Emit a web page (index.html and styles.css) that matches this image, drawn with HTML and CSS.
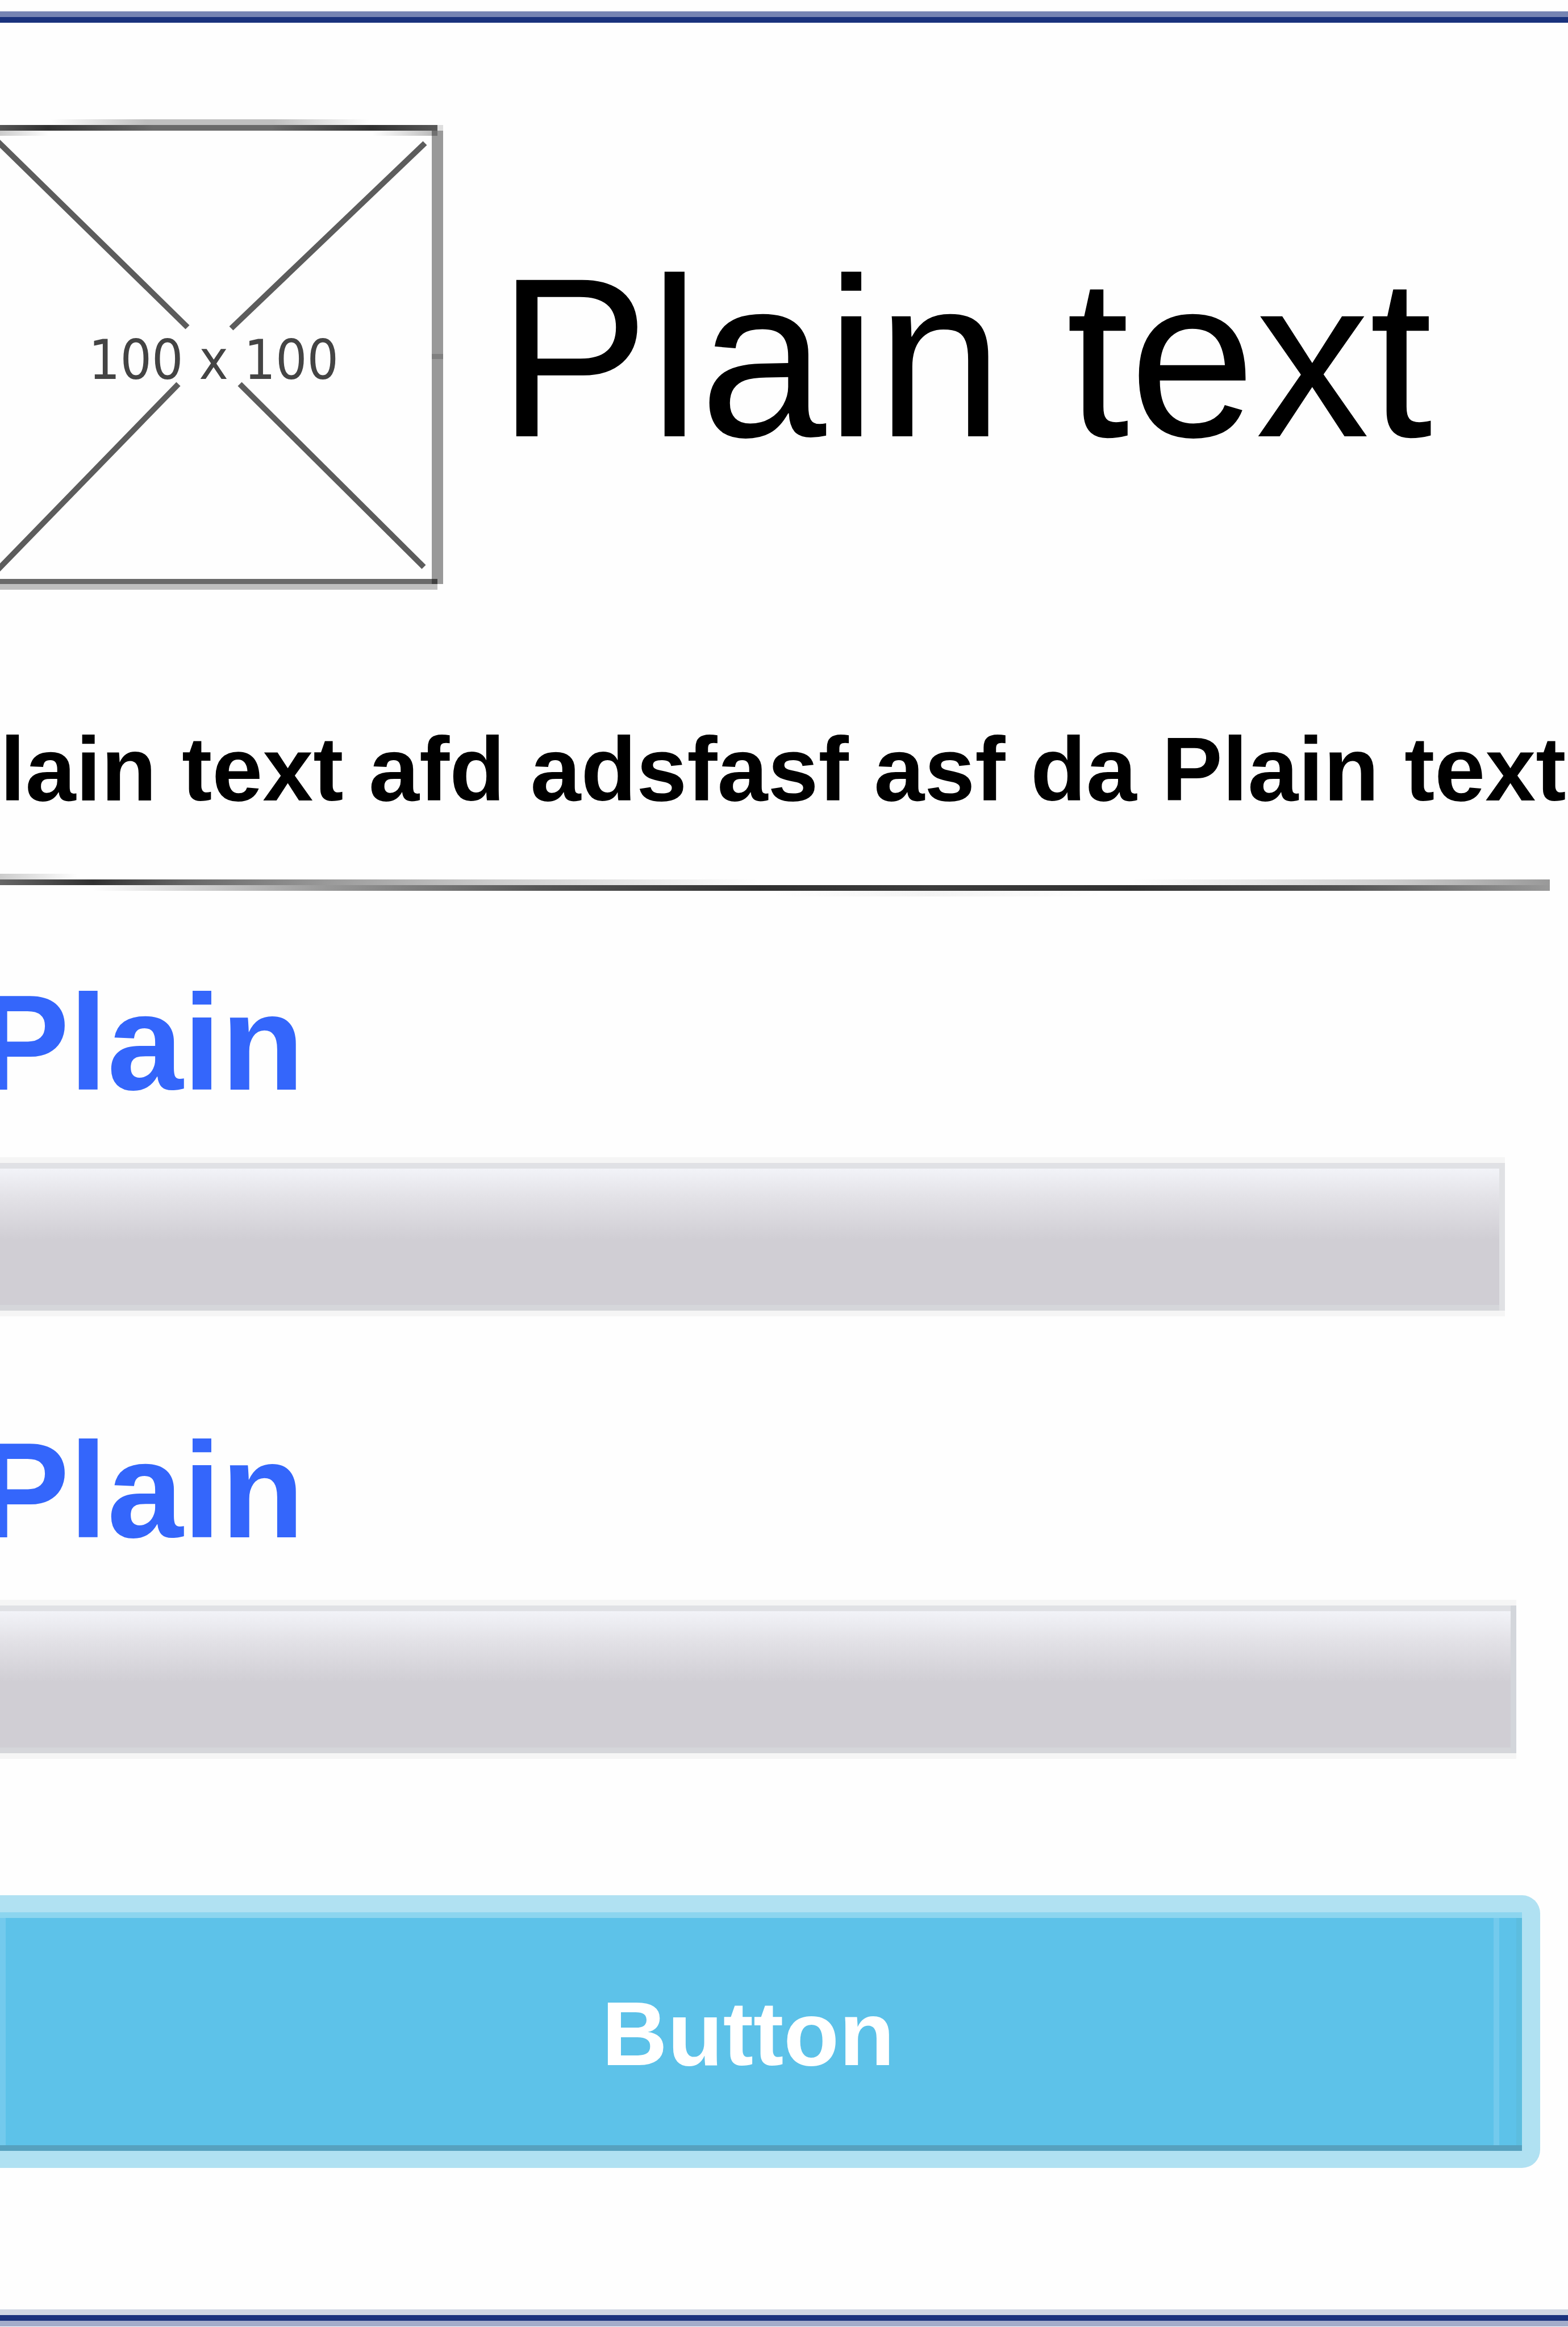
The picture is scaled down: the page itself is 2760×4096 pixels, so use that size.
FILE: index.html
```html
<!DOCTYPE html>
<html lang="en">
<head>
<meta charset="utf-8">
<title>Plain text</title>
<link rel="stylesheet" href="styles.css">
</head>
<body>
<div class="edge edge-top"></div>
<header class="hero">
  <svg class="placeholder" viewBox="0 0 780 840" role="img" aria-label="100 x 100">
    <defs>
      <linearGradient id="arc">
        <stop offset="0" stop-color="#bfbfbf" stop-opacity="0"/>
        <stop offset=".3" stop-color="#bfbfbf"/>
        <stop offset=".7" stop-color="#bfbfbf"/>
        <stop offset="1" stop-color="#bfbfbf" stop-opacity="0"/>
      </linearGradient>
      <linearGradient id="line">
        <stop offset="0" stop-color="#555"/>
        <stop offset=".11" stop-color="#303030"/>
        <stop offset=".35" stop-color="#6a6a6a"/>
        <stop offset=".62" stop-color="#6a6a6a"/>
        <stop offset=".85" stop-color="#303030"/>
        <stop offset="1" stop-color="#595959"/>
      </linearGradient>
      <linearGradient id="fadeOut">
        <stop offset="0" stop-color="#ccc"/>
        <stop offset="1" stop-color="#ccc" stop-opacity="0"/>
      </linearGradient>
      <linearGradient id="fadeIn">
        <stop offset="0" stop-color="#ccc" stop-opacity="0"/>
        <stop offset="1" stop-color="#bbb"/>
      </linearGradient>
    </defs>
    <rect x="90" y="0" width="560" height="10" fill="url(#arc)"/>
    <rect x="0" y="10" width="770" height="10" fill="url(#line)"/>
    <rect x="770" y="10" width="10" height="10" fill="#ddd"/>
    <rect x="0" y="20" width="85" height="9" fill="url(#fadeOut)"/>
    <rect x="655" y="20" width="105" height="9" fill="url(#fadeIn)"/>
    <rect x="760" y="20" width="20" height="798" fill="#999"/>
    <rect x="760" y="20" width="10" height="9" fill="#707070"/>
    <rect x="760" y="413" width="20" height="9" fill="#808080"/>
    <rect x="0" y="809" width="760" height="9" fill="#6a6a6a"/>
    <rect x="760" y="809" width="10" height="9" fill="#404040"/>
    <rect x="0" y="818" width="770" height="10" fill="#bfbfbf"/>
    <g stroke="#333" stroke-opacity=".8" stroke-width="10" fill="none">
      <path d="M-5 38 L330 366"/>
      <path d="M748 42 L407 368"/>
      <path d="M-5 794 L314 466"/>
      <path d="M422 466 L746 788"/>
    </g>
    <text class="placeholder-size" x="376" y="457" text-anchor="middle">100 x 100</text>
  </svg>
  <h1 class="title">Plain text</h1>
</header>
<p class="lead">lain text afd adsfasf asf da Plain text</p>
<hr class="divider">
<form class="form">
  <label class="label" for="first">Plain</label>
  <input class="field field-first" id="first" type="text">
  <label class="label label-second" for="second">Plain</label>
  <input class="field field-second" id="second" type="text">
  <button class="button" type="button">Button</button>
</form>
<div class="edge edge-bottom"></div>
</body>
</html>
```
FILE: styles.css
```css
* {
  box-sizing: border-box;
}

body {
  margin: 0;
  padding-top: 20px;
  display: flex;
  flex-direction: column;
  background: #fefefe;
  color: #000;
  font-family: "Liberation Sans", Arial, sans-serif;
  overflow-x: hidden;
}

.edge-top {
  height: 20px;
  background: linear-gradient(#7684b3 50%, #1a327d 50%);
}

.edge-bottom {
  height: 30px;
  margin-top: 249px;
  background: linear-gradient(#cfd6e3 0 10px, #1a327d 10px 20px, #a3acca 20px);
}

.hero {
  display: flex;
  align-items: center;
  gap: 96px;
  margin-top: 170px;
}

.placeholder {
  flex: none;
  width: 780px;
  height: 840px;
}

.placeholder-size {
  font-family: "DejaVu Sans Condensed", "Noto Sans", sans-serif;
  font-size: 97px;
  fill: #444;
}

.title {
  margin: 0;
  font-size: 400px;
  font-weight: 400;
  line-height: 400px;
  white-space: nowrap;
}

.lead {
  margin: 204px 0 0;
  font-size: 160px;
  font-weight: 700;
  line-height: 200px;
  white-space: nowrap;
}

/* A hairline that bows slightly: four stacked rows, each fading in and out */
.divider {
  width: auto;
  height: 40px;
  margin: 84px 32px 0 0;
  border: 0;
  background:
    linear-gradient(90deg, #ccc, #fefefe 5%) 0 0 / 100% 10px no-repeat,
    linear-gradient(90deg, #666, #303030 6%, #666 12%, #999 21%, #ccc 32%, #fefefe 49%, #fefefe 73%, #ccc 90%, #999) 0 10px / 100% 10px no-repeat,
    linear-gradient(90deg, #fefefe 6%, #999 21%, #555 35%, #303030 49%, #3c3c3c 60%, #303030 73%, #555 87%, #999) 0 20px / 100% 10px no-repeat,
    linear-gradient(90deg, #fefefe 50%, #f3f3f3 60%, #fefefe 71%) 0 30px / 100% 10px no-repeat;
}

.form {
  display: flex;
  flex-direction: column;
  margin-top: 117px;
}

.label {
  margin-left: -38px;
  color: #3466fb;
  font-size: 240px;
  font-weight: 700;
  line-height: 280px;
}

.label-second {
  margin-top: 166px;
}

.field {
  height: 280px;
  padding: 0 40px;
  border: solid #f5f5f5;
  border-width: 10px 0;
  border-radius: 0;
  outline: 0;
  background: linear-gradient(#f2f3f8, #e3e2e7 50px, #d0ced4 125px) 0 10px no-repeat #d0ced4;
  font: 160px "Liberation Sans", Arial, sans-serif;
}

.field-first {
  margin: 62px 111px 0 0;
  box-shadow: inset -10px 0 #e0e1e4, inset 0 10px #e0e1e5, inset 0 -10px #d5d6da;
}

.field-second {
  margin: 53px 91px 0 0;
  box-shadow: inset -10px 0 #d3d6db, inset 0 10px #e0e1e5, inset 0 -10px #d5d6da;
}

.button {
  height: 480px;
  margin: 240px 49px 0 0;
  padding: 8px 45px 0 0;
  border: solid #b0e1f2;
  border-width: 30px 32px 30px 0;
  border-radius: 0 32px 32px 0;
  background:
    linear-gradient(#73caed, #73caed) 0 0 / 10px 100% no-repeat,
    linear-gradient(#73caed, #73caed) right 40px top 0 / 10px 100% no-repeat,
    #5dc2e9;
  box-shadow: inset 0 10px #8cd5ef, inset 0 -10px #56a1bf, inset -10px 0 #5cbddf;
  color: #fff;
  font: 700 160px/200px "Liberation Sans", Arial, sans-serif;
  text-align: center;
}
```
